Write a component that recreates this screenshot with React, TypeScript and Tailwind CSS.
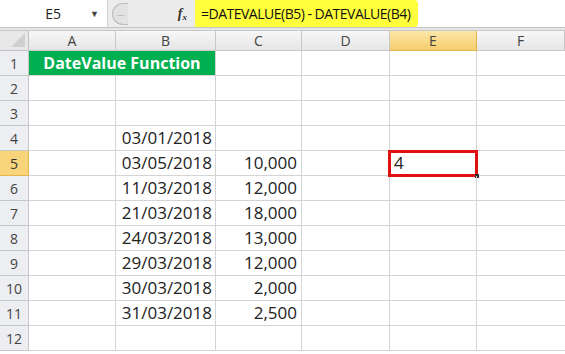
import React from 'react';

const cols = ['A', 'B', 'C', 'D', 'E', 'F'];
const widths = ['w-[87px]', 'w-[100px]', 'w-[86px]', 'w-[88px]', 'w-[87px]', 'w-[88px]'];

const rows: Record<number, { b?: string; c?: string; e?: string }> = {
  4: { b: '03/01/2018' },
  5: { b: '03/05/2018', c: '10,000', e: '4' },
  6: { b: '11/03/2018', c: '12,000' },
  7: { b: '21/03/2018', c: '18,000' },
  8: { b: '24/03/2018', c: '13,000' },
  9: { b: '29/03/2018', c: '12,000' },
  10: { b: '30/03/2018', c: '2,000' },
  11: { b: '31/03/2018', c: '2,500' },
};

export default function App() {
  return (
    <div
      className="w-[565px] h-[354px] overflow-hidden bg-white text-[#222]"
      style={{ fontFamily: '"Open Sans", "Liberation Sans", sans-serif' }}
    >
      {/* Formula bar */}
      <div className="flex h-[28px] border-b border-[#c6c6c6] bg-white">
        <div className="w-[108px] flex items-center border-r border-[#d0d0d0] relative">
          <span className="flex-1 text-center text-[14px] pl-4">E5</span>
          <span className="text-[9px] text-[#444] pr-2">▼</span>
        </div>
        <div className="w-[87px] flex items-center bg-[#ececec]">
          <div className="ml-1 w-[16px] h-[22px] rounded-l-full border border-r-0 border-[#bbb] bg-[#e2e2e2] flex items-center justify-center">
            <span className="text-[8px] text-[#aaa]">—</span>
          </div>
          <span
            className="ml-auto mr-2 text-[14px] italic font-bold text-[#333]"
            style={{ fontFamily: '"Liberation Serif", serif' }}
          >
            f<sub className="text-[9px]">x</sub>
          </span>
        </div>
        <div className="flex items-center bg-[#ffff3c] px-[6px] text-[14px] tracking-[-0.5px] text-[#111] w-[223px] rounded-r-sm whitespace-nowrap">
          =DATEVALUE(B5) - DATEVALUE(B4)
        </div>
        <div className="flex-1 bg-white" />
      </div>
      <div className="h-[3px] bg-[#e6e6e6] border-b border-[#c8c8c8]" />

      {/* Column headers */}
      <div className="flex h-[20px] text-[14px] text-[#444]">
        <div className="w-[29px] bg-[#e8e8e8] border-r border-b border-[#c0c0c0] flex items-end justify-end p-[3px]">
          <div className="w-0 h-0 border-l-[14px] border-l-transparent border-b-[14px] border-b-[#cfcfcf]" />
        </div>
        {cols.map((c, i) => (
          <div
            key={c}
            className={`${widths[i]} flex items-center justify-center border-r border-b ${
              c === 'E'
                ? 'bg-gradient-to-b from-[#fbe7a8] to-[#f6cd6c] border-[#e2b44a]'
                : 'bg-gradient-to-b from-[#f7f7f7] to-[#e6e6e6] border-[#c8c8c8]'
            }`}
          >
            {c}
          </div>
        ))}
      </div>

      {/* Rows */}
      {Array.from({ length: 12 }, (_, k) => k + 1).map((r) => {
        const d = rows[r] || {};
        return (
          <div key={r} className="flex h-[25px] text-[17px]">
            <div
              className={`w-[29px] flex items-center justify-center text-[14px] border-r border-b ${
                r === 5
                  ? 'bg-[#f8d47a] border-[#e2b44a] text-[#333]'
                  : 'bg-[#eceef2] border-[#c6c6c6] text-[#444]'
              }`}
            >
              {r}
            </div>
            {r === 1 ? (
              <div className="w-[187px] flex items-center justify-center bg-[#00b050] text-white font-bold text-[16px] border-r border-b border-[#d4d4d4]">
                DateValue Function
              </div>
            ) : (
              <>
                <div className="w-[87px] border-r border-b border-[#d4d4d4]" />
                <div className="w-[100px] border-r border-b border-[#d4d4d4] flex items-center justify-end pr-[3px]">
                  {d.b}
                </div>
              </>
            )}
            <div className="w-[86px] border-r border-b border-[#d4d4d4] flex items-center justify-end pr-[4px]">
              {d.c}
            </div>
            <div className="w-[88px] border-r border-b border-[#d4d4d4]" />
            <div className="w-[87px] border-r border-b border-[#d4d4d4] flex items-center pl-[4px] relative">
              {d.e}
              {r === 5 && (
                <div className="absolute -left-[2px] -top-[1px] w-[90px] h-[27px] border-[3px] border-[#e01010]">
                  <div className="absolute -right-[4px] -bottom-[4px] w-[4px] h-[4px] bg-[#333]" />
                </div>
              )}
            </div>
            <div className="w-[88px] border-b border-[#d4d4d4]" />
          </div>
        );
      })}
    </div>
  );
}
